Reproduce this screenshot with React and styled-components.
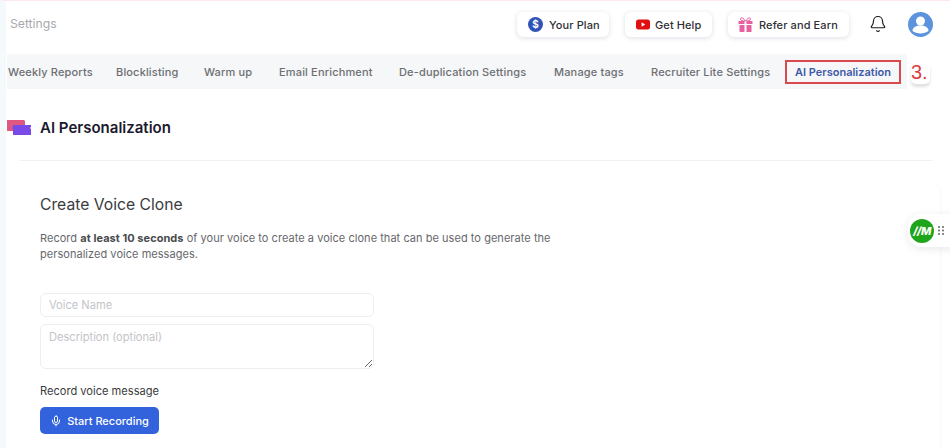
import React from "react";
import styled, { createGlobalStyle } from "styled-components";
import { Mic, Bell } from "lucide-react";

const Global = createGlobalStyle`
  html, body { margin: 0; padding: 0; background: #fff; }
  body { width: 950px; height: 448px; overflow: hidden; font-family: Inter, "Noto Sans", "Liberation Sans", sans-serif; }
  * { box-sizing: border-box; }
`;

const Page = styled.div`
  position: relative;
  width: 950px;
  height: 448px;
  overflow: hidden;
  background: #fff;
  border-top: 1px solid #fde8ec;
  border-left: 6px solid #f4fafb;
`;

const Header = styled.header`
  height: 53px;
  display: flex;
  align-items: center;
  padding: 0 17px 6px 4px;
`;

const Crumb = styled.div`
  font-size: 12.2px;
  color: #a9a9ad;
  margin-right: auto;
  margin-top: -2px;
`;

const PillButton = styled.button`
  height: 25px;
  width: ${(p) => p.$w}px;
  margin-right: ${(p) => p.$gap}px;
  padding: 0 0 0 ${(p) => p.$left}px;
  display: flex;
  align-items: center;
  gap: ${(p) => p.$iconGap}px;
  border: 0;
  border-radius: 6px;
  background: #fff;
  box-shadow: 0 1px 5px rgba(40, 50, 80, 0.16);
  font: 500 11px Inter, "Noto Sans", sans-serif;
  letter-spacing: 0.1px;
  color: #2f3036;
`;

const BellWrap = styled.div`
  width: 18px;
  height: 20px;
  color: #1b1b1f;
  margin-right: 21px;
`;

const Avatar = styled.svg`
  width: 25px;
  height: 25px;
`;

const Tabs = styled.nav`
  width: 900px;
  height: 35px;
  margin-left: 1px;
  background: #f5f7f9;
  display: flex;
  align-items: center;
  padding-left: 1px;
`;

const Tab = styled.div`
  font-size: 11px;
  font-weight: 500;
  letter-spacing: 0.16px;
  white-space: nowrap;
  width: ${(p) => p.$w}px;
  flex: none;
  color: #6e6f73;
`;

const ActiveTab = styled.div`
  flex: none;
  width: 116px;
  height: 24px;
  margin-left: -9px;
  border: 2px solid #d8494c;
  color: #3f5aa8;
  font-size: 11px;
  font-weight: 600;
  display: flex;
  align-items: center;
  justify-content: center;
  white-space: nowrap;
`;

const StepBadge = styled.div`
  position: absolute;
  left: 905px;
  top: 60px;
  width: 19px;
  height: 23px;
  font: 400 20px "Liberation Sans", sans-serif;
  line-height: 23px;
  color: #d8403f;
  background: #fff;
  border-radius: 5px;
  box-shadow: 0 3px 3px rgba(0, 0, 0, 0.12);
`;

const TitleRow = styled.div`
  height: 71px;
  display: flex;
  align-items: center;
  gap: 9px;
  margin-left: 1px;
  padding-top: 6px;
`;

const Divider = styled.hr`
  height: 1px;
  margin: 0 18px 0 14px;
  border: 0;
  background: #f0f1f3;
`;

const Title = styled.h1`
  margin: 0;
  font-size: 15px;
  font-weight: 600;
  color: #1a1a2e;
`;

const Card = styled.section`
  margin: 23px 10px 0 12px;
  height: 300px;
  padding: 11px 22px;
  border-radius: 0 8px 0 0;
  box-shadow: 2px 0 3px -1px rgba(30, 40, 70, 0.04);
`;

const CardTitle = styled.h2`
  margin: 0;
  font-size: 15.7px;
  line-height: 20px;
  font-weight: 400;
  color: #3a3b40;
`;

const Lead = styled.p`
  width: 540px;
  margin: 15px 0 31px;
  font-size: 11px;
  letter-spacing: 0.04px;
  line-height: 16px;
  color: #66676c;
  strong { font-weight: 700; color: #4a4b50; }
`;

const Field = styled.input`
  display: block;
  width: 334px;
  height: 24px;
  padding: 0 8px;
  border: 1px solid #eeeeef;
  border-radius: 6px;
  font: 400 11.1px Inter, sans-serif;
  outline: none;
  &::placeholder { color: #c3c4c8; }
`;

const Area = styled.textarea`
  display: block;
  width: 334px;
  height: 45px;
  margin-top: 7px;
  padding: 5px 8px;
  border: 1px solid #eeeeef;
  border-radius: 6px;
  font: 400 11.1px Inter, sans-serif;
  outline: none;
  &::placeholder { color: #c3c4c8; }
`;

const Label = styled.div`
  margin: 14px 0 8px;
  font-size: 11.1px;
  line-height: 16px;
  color: #3a3b40;
`;

const RecordButton = styled.button`
  width: 119px;
  height: 27px;
  border: 0;
  border-radius: 5px;
  background: #3262dc;
  color: #fff;
  display: flex;
  align-items: center;
  justify-content: center;
  gap: 5px;
  font: 500 11px Inter, sans-serif;
`;

const Widget = styled.div`
  position: absolute;
  left: 902px;
  top: 213px;
  width: 60px;
  height: 33px;
  padding-left: 2px;
  display: flex;
  align-items: center;
  gap: 4px;
  background: #fff;
  border-radius: 14px 0 0 14px;
  box-shadow: 0 2px 8px rgba(30, 40, 70, 0.1);
`;

const WidgetLogo = styled.div`
  width: 24px;
  height: 24px;
  border-radius: 50%;
  background: #1fa51a;
  color: #fff;
  font: italic 800 11px Inter, sans-serif;
  letter-spacing: -0.5px;
  display: flex;
  align-items: center;
  justify-content: center;
`;

const Grip = styled.svg`
  width: 6px;
  height: 9px;
`;

const Dollar = () => (
  <svg width="15" height="15" viewBox="0 0 15 15">
    <circle cx="7.5" cy="7.5" r="7.5" fill="#3153b8" />
    <text x="7.5" y="11" textAnchor="middle" fontSize="10" fontWeight="700" fill="#fff" fontFamily="Inter, sans-serif">$</text>
  </svg>
);

const Youtube = () => (
  <svg width="14" height="11" viewBox="0 0 14 11">
    <rect width="14" height="10" y="0.5" rx="2.5" fill="#e01010" />
    <path d="M5.6 3.3 9.2 5.5 5.6 7.7z" fill="#fff" />
  </svg>
);

const Gift = () => (
  <svg width="15" height="15" viewBox="0 0 15 15" fill="#e8609f">
    <rect x="0.5" y="4" width="14" height="3" />
    <rect x="1.5" y="8" width="12" height="7" />
    <rect x="6.5" y="4" width="2" height="11" fill="#fff" />
    <path d="M7.5 4C5 .5 2.5 0 2.5 2S5 4 7.5 4C10 4 12.5 4 12.5 2S10 .5 7.5 4Z" fill="none" stroke="#e8609f" />
  </svg>
);

const Logo = () => (
  <svg width="24" height="16" viewBox="0 0 24 16">
    <path d="M0 0h17l1 1v10H0z" fill="#e0577f" />
    <path d="M6 5h18v2l-1 1 1 1v6H6V9L5 8l1-1z" fill="#7a4ae8" />
  </svg>
);

const tabs = [
  ["Weekly Reports", 108],
  ["Blocklisting", 88],
  ["Warm up", 75],
  ["Email Enrichment", 120],
  ["De-duplication Settings", 155],
  ["Manage tags", 97],
  ["Recruiter Lite Settings", 143],
];

export default function App() {
  return (
    <Page>
      <Global />
      <Header>
        <Crumb>Settings</Crumb>
        <PillButton $w={92} $gap={16} $left={11} $iconGap={6}><Dollar />Your Plan</PillButton>
        <PillButton $w={87} $gap={16} $left={11} $iconGap={5}><Youtube />Get Help</PillButton>
        <PillButton $w={121} $gap={20} $left={10} $iconGap={6}><Gift />Refer and Earn</PillButton>
        <BellWrap><Bell size={18} strokeWidth={1.6} /></BellWrap>
        <Avatar viewBox="0 0 25 25">
          <circle cx="12.5" cy="12.5" r="12.5" fill="#5b93dc" />
          <circle cx="12.5" cy="9" r="4.5" fill="#fff" />
          <path d="M4.5 19c0-4 4-5.500 8-5.500s8 1.500 8 5.500c-2 1.500-5 2.500-8 2.500S6.500 20.500 4.500 19Z" fill="#fff" />
        </Avatar>
      </Header>
      <Tabs>
        {tabs.map(([t, w]) => <Tab key={t} $w={w}>{t}</Tab>)}
        <ActiveTab>AI Personalization</ActiveTab>
      </Tabs>
      <StepBadge>3.</StepBadge>
      <TitleRow>
        <Logo />
        <Title>AI Personalization</Title>
      </TitleRow>
      <Divider />
      <Card>
        <CardTitle>Create Voice Clone</CardTitle>
        <Lead>
          Record <strong>at least 10 seconds</strong> of your voice to create a voice clone that can be used to generate the personalized voice messages.
        </Lead>
        <Field placeholder="Voice Name" />
        <Area placeholder="Description (optional)" />
        <Label>Record voice message</Label>
        <RecordButton><Mic size={12} />Start Recording</RecordButton>
      </Card>
      <Widget>
        <WidgetLogo>//M</WidgetLogo>
        <Grip viewBox="0 0 6 9" fill="#666">
          {[1, 4.5, 8].flatMap((y) => [1, 5].map((x) => <circle key={`${x}-${y}`} cx={x} cy={y} r="1" />))}
        </Grip>
      </Widget>
    </Page>
  );
}
